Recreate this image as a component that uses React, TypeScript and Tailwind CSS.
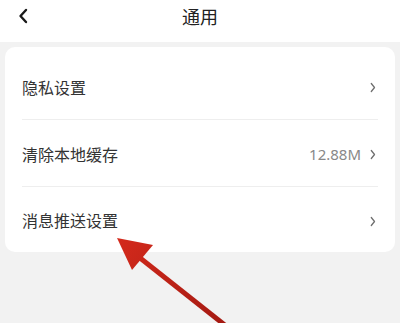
import React from "react";

function Chevron() {
  return (
    <svg width="6" height="11" viewBox="0 0 6 11" className="ml-[9px]">
      <path d="M1.3 1.5 L4.5 5.5 L1.3 9.5" fill="none" stroke="#707070" strokeWidth="1.3" strokeLinecap="round" strokeLinejoin="round" />
    </svg>
  );
}

function Row({ label, value, last }: { label: string; value?: string; last?: boolean }) {
  return (
    <div className="px-[17px]">
      <div className={`flex items-center justify-between pt-[3px] ${last ? "h-[65px]" : "h-[67px] border-b border-[#eeeeee]"}`}>
        <span className="text-[16px] text-[#333333]">{label}</span>
        <div className="flex items-center pr-[2px]">
          {value && <span className="text-[15px] text-[#888888]">{value}</span>}
          <Chevron />
        </div>
      </div>
    </div>
  );
}

export default function App() {
  return (
    <div
      className="relative w-[400px] h-[323px] bg-[#f2f2f2] overflow-hidden"
      style={{ fontFamily: '"Noto Sans", "Noto Sans CJK SC", sans-serif' }}
    >
      <div className="h-[42px] bg-white flex items-center justify-center relative">
        <svg width="12" height="16" viewBox="0 0 12 16" className="absolute left-[17px] top-[8px]">
          <path d="M9 2 L3.5 8 L9 14" fill="none" stroke="#1a1a1a" strokeWidth="2.4" strokeLinecap="round" strokeLinejoin="round" />
        </svg>
        <span className="text-[18px] text-[#222222] -mt-[8px]">通用</span>
      </div>
      <div className="px-[5px] pt-[5px]">
        <div className="bg-white rounded-[10px] pt-[6px]">
          <Row label="隐私设置" />
          <Row label="清除本地缓存" value="12.88M" />
          <Row label="消息推送设置" last />
        </div>
      </div>
      <svg className="absolute left-0 top-0" width="400" height="323" viewBox="0 0 400 323">
        <defs>
          <linearGradient id="ag" x1="117" y1="238" x2="223" y2="323" gradientUnits="userSpaceOnUse">
            <stop offset="0" stopColor="#d42a1c" />
            <stop offset="1" stopColor="#a51a12" />
          </linearGradient>
        </defs>
        <line x1="130" y1="250" x2="226" y2="326" stroke="url(#ag)" strokeWidth="5" />
        <polygon points="117,238 153,245 132,270" fill="url(#ag)" />
      </svg>
    </div>
  );
}
